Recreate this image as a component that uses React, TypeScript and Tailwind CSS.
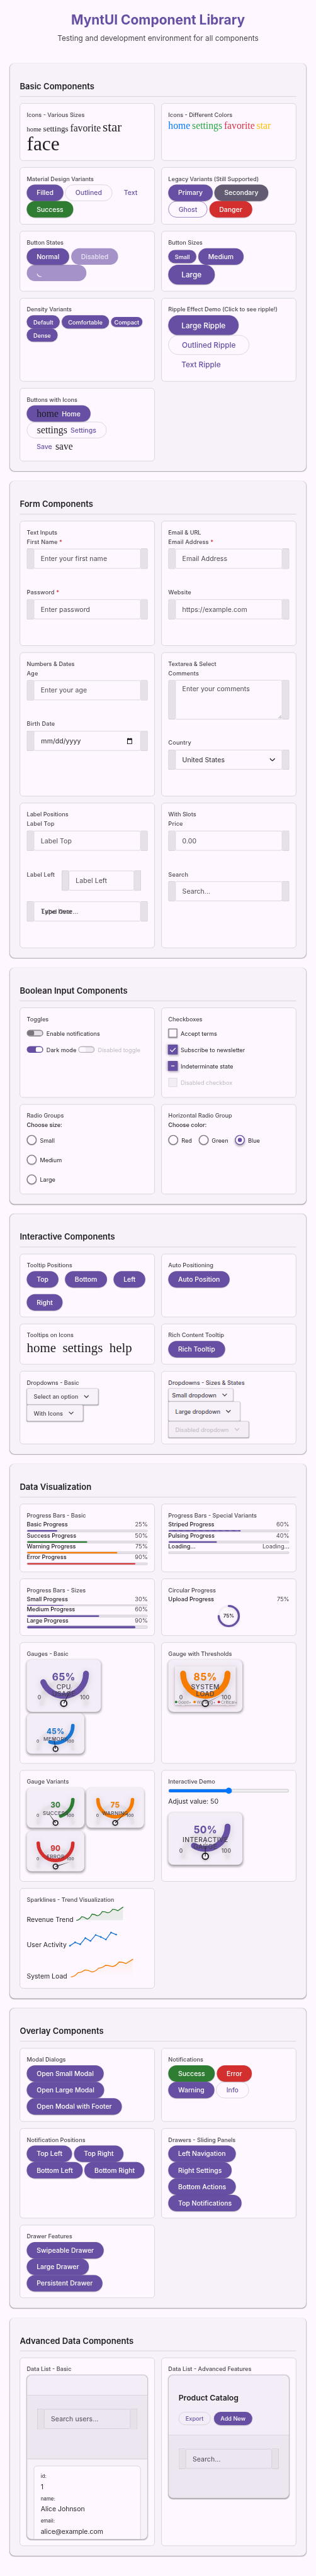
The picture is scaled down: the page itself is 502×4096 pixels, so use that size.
import React from 'react';

type Kids = { children?: React.ReactNode };

function Section({ title, children }: Kids & { title: string }) {
  return (
    <section className="mx-6 mb-6 rounded-xl bg-[#f7f2fa] px-6 pt-6 pb-6 shadow-[0_1px_3px_rgba(0,0,0,0.12),0_1px_2px_rgba(0,0,0,0.24)]">
      <h2 className="mt-5 mb-4 h-[37px] border-b border-[#cac4d0] text-[20px] leading-[25px] font-semibold text-[#1d1b20]">{title}</h2>
      <div className="grid grid-cols-2 gap-4">{children}</div>
    </section>
  );
}

function Card({ title, h, children }: Kids & { title: string; h: string }) {
  return (
    <div className={`min-w-0 rounded-lg border border-[#cac4d0] bg-[#fef7ff] px-4 pt-4 ${h}`}>
      <h3 className="mb-1 text-[14px] leading-[21px] font-medium text-[#49454f]">{title}</h3>
      {children}
    </div>
  );
}

const variants = {
  filled: 'bg-[#6750a4] text-white shadow-[0_1px_3px_rgba(0,0,0,0.12),0_1px_2px_rgba(0,0,0,0.24)]',
  secondary: 'bg-[#625b71] text-white shadow-[0_1px_3px_rgba(0,0,0,0.12),0_1px_2px_rgba(0,0,0,0.24)]',
  success: 'bg-[#2e7d32] text-white shadow-[0_1px_3px_rgba(0,0,0,0.12),0_1px_2px_rgba(0,0,0,0.24)]',
  danger: 'bg-[#d32f2f] text-white shadow-[0_1px_3px_rgba(0,0,0,0.12),0_1px_2px_rgba(0,0,0,0.24)]',
  outlined: 'border border-[#cac4d0] text-[#6750a4]',
  ghost: 'border border-[#6750a4] text-[#6750a4]',
  text: 'text-[#6750a4]',
  disabled: 'bg-[#a492c8] text-[#ebe6f5]',
};

const sizes = {
  md: 'h-10 px-6 text-[16px]',
  sm: 'h-8 px-4 text-[14px]',
  compact: 'h-6 px-2 text-[14px]',
  lg: 'h-12 px-8 text-[18px]',
};

function Btn({ v = 'filled', s = 'md', children }: Kids & { v?: keyof typeof variants; s?: keyof typeof sizes }) {
  return (
    <button className={`inline-flex shrink-0 items-center gap-2 rounded-full font-medium whitespace-nowrap ${variants[v]} ${sizes[s]}`}>
      {children}
    </button>
  );
}

function Row({ children }: Kids) {
  return <div className="flex items-center gap-x-[4.5px]">{children}</div>;
}

function Glyph({ c, children }: Kids & { c: string }) {
  return <span className={`font-['Liberation_Serif',serif] leading-none font-normal tracking-normal ${c}`}>{children}</span>;
}

function Shell({ h = 'h-[50px]', ih = 'h-12', inner = '', children }: Kids & { h?: string; ih?: string; inner?: string }) {
  return (
    <div className={`flex items-center ${h}`}>
      <div className="h-full w-[17px] shrink-0 rounded-l border border-r-0 border-[#cac4d0] bg-[#e6e0e9]" />
      <div className={`relative flex min-w-0 flex-1 rounded border border-[#cac4d0] px-4 text-[16px] tracking-[0.15px] text-[#49454f] ${ih} ${inner}`}>{children}</div>
      <div className="h-full w-[17px] shrink-0 rounded-r border border-l-0 border-[#cac4d0] bg-[#e6e0e9]" />
    </div>
  );
}

function Label({ children, required }: Kids & { required?: boolean }) {
  return (
    <div className="h-[25px] text-[14px] leading-[17px] font-medium tracking-[0.25px] text-[#49454f]">
      {children}
      {required && <span className="text-[#d32f2f]"> *</span>}
    </div>
  );
}

function Field({ label, required, children }: Kids & { label: string; required?: boolean }) {
  return (
    <div className="h-[123px]">
      <Label required={required}>{label}</Label>
      <Shell inner="items-center">{children}</Shell>
    </div>
  );
}

function Chevron() {
  return (
    <svg width="24" height="24" viewBox="0 0 24 24" fill="currentColor">
      <path d="M7.41 8.59 12 13.17l4.59-4.58L18 10l-6 6-6-6z" />
    </svg>
  );
}

function Dropdown({ h = 'h-10', pad = 'px-4', dim = false, children }: Kids & { h?: string; pad?: string; dim?: boolean }) {
  return (
    <div className={`flex w-fit items-center gap-2 rounded border border-[#cac4d0] text-[14px] font-medium shadow-[0_1px_3px_rgba(0,0,0,0.12),0_1px_2px_rgba(0,0,0,0.24)] ${dim ? 'bg-[#f4edf5] text-[#c6c0cb]' : 'bg-[#f7f2fa] text-[#49454f]'} ${h} ${pad}`}>
      <span>{children}</span>
      <Chevron />
    </div>
  );
}

function Progress({ label, value, w, color = 'bg-[#6750a4]', h = 'h-1.5' }: { label: string; value: string; w: string; color?: string; h?: string }) {
  return (
    <div>
      <div className="mb-1 flex h-[16.8px] justify-between text-[14px] leading-[15px]">
        <span className="font-medium text-[#1d1b20]">{label}</span>
        <span className="text-[#49454f]">{value}</span>
      </div>
      <div className={`overflow-hidden rounded-full border border-[#cac4d0] bg-[#e6e0e9] ${h}`}>
        <div className={`h-full rounded-full ${w} ${color}`} />
      </div>
    </div>
  );
}

function polar(cx: number, cy: number, r: number, deg: number) {
  const a = (deg * Math.PI) / 180;
  return [cx + r * Math.cos(a), cy + r * Math.sin(a)];
}

function Gauge({ value, text, lines, color, small = false, legend = false }: { value: number; text: string; lines: string[]; color: string; small?: boolean; legend?: boolean }) {
  const g = small
    ? { w: 140, h: 98, cx: 70, cy: 86.3, ay: 29.5, r: 42, sw: 8, aw: 8.6, hub: 5.8, hs: 2.6, nl: 37, vs: 18, vy: 49, ls: 12.4, ly: 67, lh: 14, ts: 10, ty: 71.7, tx: 27.3, tx2: 106.4 }
    : { w: 180, h: 127, cx: 90, cy: 106.5, ay: 34.2, r: 54, sw: 10.3, aw: 14.4, hub: 7.4, hs: 3, nl: 48.4, vs: 24, vy: 51, ls: 16, ly: 72.6, lh: 16.8, ts: 13, ty: 97.3, tx: 31, tx2: 141 };
  const sweep = Math.min(180, value * 2.42);
  const [ex, ey] = polar(g.cx, g.ay, g.r, sweep);
  const angle = value * 1.8 - 90;
  return (
    <div className={`relative rounded-xl bg-[#f3edf7] shadow-[0_3px_6px_rgba(0,0,0,0.16),0_3px_6px_rgba(0,0,0,0.23)] ${small ? 'h-[98px] w-[140px]' : 'h-[127px] w-[180px]'}`}>
      {legend && <div className="absolute top-4 left-4 h-[94px] w-[148px] bg-[#f1ebf5] shadow-[0_2px_5px_rgba(0,0,0,0.25),0_4px_14px_rgba(160,60,60,0.14)]" />}
      <svg className="relative block overflow-visible font-['Inter',sans-serif]" width={g.w} height={g.h} viewBox={`0 0 ${g.w} ${g.h}`}>
        <g fill="none" strokeLinecap="round">
          <path className="drop-shadow-[0_2px_6px_rgba(0,0,0,0.08)]" d={`M${g.cx - g.r} ${g.cy}A${g.r} ${g.r} 0 0 1 ${g.cx + g.r} ${g.cy}`} stroke="#e6e0e9" strokeWidth={g.sw} />
          <path className="drop-shadow-[0_2px_8px_rgba(0,0,0,0.14)]" d={`M${g.cx + g.r} ${g.ay}A${g.r} ${g.r} 0 0 1 ${ex} ${ey}`} stroke={color} strokeWidth={g.aw} />
        </g>
        <g textAnchor="middle" letterSpacing="0.5">
          <text className="drop-shadow-[0_1px_1px_rgba(0,0,0,0.15)]" x={g.cx} y={g.vy} fontSize={g.vs} fontWeight="700" fill={color}>{text}</text>
          {lines.map((l, i) => (
            <text key={l} x={g.cx} y={g.ly + i * g.lh} fontSize={g.ls} fontWeight="500" fill="#49454f">{l}</text>
          ))}
          <text x={g.tx} y={g.ty} fontSize={g.ts} fontWeight="500" fill="#49454f">0</text>
          <text x={g.tx2} y={g.ty} fontSize={g.ts} fontWeight="500" fill="#49454f">100</text>
        </g>
        <circle className="drop-shadow-[0_1px_3px_rgba(0,0,0,0.25)]" cx={g.cx} cy={g.cy} r={g.hub} fill="#f7f2fa" stroke="#1d1b20" strokeWidth={g.hs} />
        <path d={`M${g.cx - 1} ${g.cy}L${g.cx} ${g.cy - g.nl}L${g.cx + 1} ${g.cy}Z`} fill="#1d1b20" opacity={legend ? 0.6 : 1} transform={`rotate(${angle} ${g.cx} ${g.cy})`} />
      </svg>
      {legend && (
        <div className="absolute top-[96px] left-4 flex gap-[5px] text-[10px] leading-[14px] text-[#79747e]">
          {[['bg-[#2e7d32]', 'Good+'], ['bg-[#f57c00]', 'Warning+'], ['bg-[#d32f2f]', 'Critical+']].map(([c, t]) => (
            <span key={t} className="flex items-center gap-0.5">
              <i className={`size-1.5 rounded-full ${c}`} />
              {t}
            </span>
          ))}
        </div>
      )}
    </div>
  );
}

function smooth(ys: number[], step: number) {
  return ys
    .map((y, i) => {
      if (i === 0) return `M0 ${y}`;
      if (i === ys.length - 1) return `L${i * step} ${y}`;
      return `Q${(i - 0.5) * step} ${ys[i - 1]} ${i * step} ${y}`;
    })
    .join('');
}

const revenue = [32.1, 23.2, 29, 17, 21, 10.7, 13.8, 5.4, 8.9, 0];
const activity = [32.1, 23.7, 28.6, 13.4, 20.5, 5.8, 10.7, 17, 0, 4.9];
const load = [42.9, 32.6, 25.9, 30.8, 21.4, 14.7, 17.4, 6.7, 10.3, 0];

function Toggle({ label, state }: { label: string; state: 'off' | 'on' | 'disabled' }) {
  const box = { off: 'border-[#79747e] bg-[#e6e0e9]', on: 'justify-end border-[#6750a4] bg-[#6750a4]', disabled: 'border-[#bab5bd] bg-[#f0eaf4]' }[state];
  const knob = { off: 'rounded-r-[4px] bg-[#79747e]', on: 'rounded-l-[4px] bg-white', disabled: 'rounded-r-[4px] bg-[#fcf7fe]' }[state];
  return (
    <span className="flex h-10 items-center gap-2">
      <span className={`flex h-4 w-10 overflow-hidden rounded-full border-2 shadow-[inset_0_1px_2px_rgba(0,0,0,0.1)] ${box}`}>
        <span className={`h-3 w-4 ${knob}`} />
      </span>
      <span className={`text-[14px] ${state === 'disabled' ? 'text-[#c0bbc3]' : 'text-[#1d1b20]'}`}>{label}</span>
    </span>
  );
}

function Check({ label, state = 'off' }: { label: string; state?: 'off' | 'on' | 'mixed' | 'disabled' }) {
  const on = state === 'on' || state === 'mixed';
  return (
    <span className="flex h-10 items-center gap-2">
      {on ? (
        <span className="-mx-px flex size-6 items-center justify-center rounded-[1px] bg-[#6750a4] shadow-[-3px_0_5px_rgba(0,0,0,0.14),2px_3px_5px_rgba(0,0,0,0.22)]">
          <svg width="24" height="24" viewBox="0 0 24 24" fill="none" stroke="white" strokeWidth="2">
            {state === 'on' ? <path d="M5.5 12.5l4.500 4.500L18.500 8.500" /> : <path d="M8 12h8" />}
          </svg>
        </span>
      ) : (
        <span className={`size-[22px] border-2 ${state === 'disabled' ? 'border-[#e4dee7] bg-[#f3edf7]' : 'border-[#79747e] shadow-[0_1px_3px_rgba(0,0,0,0.12),0_1px_2px_rgba(0,0,0,0.24)]'}`} />
      )}
      <span className={`text-[14px] ${state === 'disabled' ? 'text-[#c0bbc3]' : 'text-[#1d1b20]'}`}>{label}</span>
    </span>
  );
}

function Radio({ label, on = false }: { label: string; on?: boolean }) {
  return (
    <span className="flex h-10 items-center gap-2">
      <span className={`flex size-6 items-center justify-center rounded-full border-2 bg-[#fef7ff] ${on ? 'border-[#6750a4] shadow-[0_3px_6px_rgba(0,0,0,0.16),0_3px_6px_rgba(0,0,0,0.23)]' : 'border-[#79747e] shadow-[0_1px_3px_rgba(0,0,0,0.12),0_1px_2px_rgba(0,0,0,0.24)]'}`}>
        {on && <span className="size-2.5 rounded-full bg-[#6750a4]" />}
      </span>
      <span className="text-[14px] text-[#1d1b20]">{label}</span>
    </span>
  );
}

export default function App() {
  return (
    <div className="h-[4096px] w-[502px] overflow-hidden bg-[#fef7ff]">
      <main className="h-[6266px] w-[768px] origin-top-left scale-[0.65367] font-['Inter',sans-serif] text-[#1d1b20]">
        <header className="h-[154px] pt-7 text-center">
          <h1 className="text-[32px] leading-10 font-bold text-[#6750a4]">MyntUI Component Library</h1>
          <p className="mt-[14px] text-[18px] leading-6 text-[#49454f]">Testing and development environment for all components</p>
        </header>

        <Section title="Basic Components">
          <Card title="Icons - Various Sizes" h="h-[140px]">
            <div className="flex h-[33px] items-baseline gap-[4.4px]">
              <Glyph c="text-[16px]">home</Glyph>
              <Glyph c="text-[20px]">settings</Glyph>
              <Glyph c="text-[24px]">favorite</Glyph>
              <Glyph c="text-[32px]">star</Glyph>
            </div>
            <div className="flex"><Glyph c="text-[48px]">face</Glyph></div>
          </Card>
          <Card title="Icons - Different Colors" h="h-[140px]">
            <div className="flex gap-[4.4px]">
              <Glyph c="text-[24px] text-[#007bff]">home</Glyph>
              <Glyph c="text-[24px] text-[#28a745]">settings</Glyph>
              <Glyph c="text-[24px] text-[#dc3545]">favorite</Glyph>
              <Glyph c="text-[24px] text-[#ffc107]">star</Glyph>
            </div>
          </Card>
          <Card title="Material Design Variants" h="h-[139px]">
            <Row>
              <Btn>Filled</Btn>
              <Btn v="outlined">Outlined</Btn>
              <Btn v="text">Text</Btn>
            </Row>
            <Row>
              <Btn v="success">Success</Btn>
            </Row>
          </Card>
          <Card title="Legacy Variants (Still Supported)" h="h-[139px]">
            <Row>
              <Btn>Primary</Btn>
              <Btn v="secondary">Secondary</Btn>
            </Row>
            <Row>
              <Btn v="ghost">Ghost</Btn>
              <Btn v="danger">Danger</Btn>
            </Row>
          </Card>
          <Card title="Button States" h="h-[147px]">
            <Row>
              <Btn>Normal</Btn>
              <Btn v="disabled">Disabled</Btn>
            </Row>
            <div className="flex h-10 w-[145px] items-center rounded-full bg-[#a492c8] px-6">
              <svg width="20" height="20" viewBox="0 0 20 20" fill="none" stroke="#f3effa" strokeWidth="2">
                <path d="M1.2 11.5A9 9 0 0 0 12 18.8" />
              </svg>
            </div>
          </Card>
          <Card title="Button Sizes" h="h-[147px]">
            <Row>
              <Btn s="sm">Small</Btn>
              <Btn>Medium</Btn>
            </Row>
            <Btn s="lg">Large</Btn>
          </Card>
          <Card title="Density Variants" h="h-[203px]">
            <Row>
              <Btn s="sm">Default</Btn>
              <Btn s="sm">Comfortable</Btn>
              <Btn s="compact">Compact</Btn>
            </Row>
            <Row>
              <Btn s="sm">Dense</Btn>
            </Row>
          </Card>
          <Card title="Ripple Effect Demo (Click to see ripple!)" h="h-[203px]">
            <div className="flex flex-col items-start">
              <Btn s="lg">Large Ripple</Btn>
              <Btn s="lg" v="outlined">Outlined Ripple</Btn>
              <Btn s="lg" v="text">Text Ripple</Btn>
            </div>
          </Card>
          <Card title="Buttons with Icons" h="h-[178px]">
            <div className="flex flex-col items-start">
              <Btn><Glyph c="text-[24px] text-[#1d1b20]">home</Glyph>Home</Btn>
              <Btn v="outlined"><Glyph c="text-[24px] text-[#1d1b20]">settings</Glyph>Settings</Btn>
              <Btn v="text">Save<Glyph c="text-[24px] text-[#1d1b20]">save</Glyph></Btn>
            </div>
          </Card>
        </Section>

        <Section title="Form Components">
          <Card title="Text Inputs" h="h-[304px]">
            <Field label="First Name" required>Enter your first name</Field>
            <Field label="Password" required>Enter password</Field>
          </Card>
          <Card title="Email & URL" h="h-[304px]">
            <Field label="Email Address" required>Email Address</Field>
            <Field label="Website">https://example.com</Field>
          </Card>
          <Card title="Numbers & Dates" h="h-[350px]">
            <Field label="Age">Enter your age</Field>
            <Field label="Birth Date">
              <span className="ml-px flex-1 text-[#1d1b20]">mm/dd/yyyy</span>
              <svg className="mr-[3px]" width="14" height="15" viewBox="0 0 14 15" fill="#000">
                <path d="M3 0h1.6v1.4h4.8V0H11v1.4h2V15H1V1.4h2zM2.4 5v8.6h9.2V5z" fillRule="evenodd" />
              </svg>
            </Field>
          </Card>
          <Card title="Textarea & Select" h="h-[350px]">
            <div className="h-[169px]">
              <Label>Comments</Label>
              <Shell h="h-24" ih="h-24" inner="pt-[11px]">
                <span className="leading-5">Enter your comments</span>
                <svg className="absolute right-px bottom-px" width="8" height="8" viewBox="0 0 8 8" stroke="#49454f" strokeWidth="0.8">
                  <path d="M0 8L8 0M4 8L8 4" />
                </svg>
              </Shell>
            </div>
            <Field label="Country">
              <span className="flex-1 text-[#1d1b20]">United States</span>
              <svg width="14" height="8" viewBox="0 0 14 8" fill="none" stroke="#1d1b20" strokeWidth="2">
                <path d="M1 1l6 6 6-6" />
              </svg>
            </Field>
          </Card>
          <Card title="Label Positions" h="h-[353px]">
            <Field label="Label Top">Label Top</Field>
            <div className="flex h-[74px] gap-4">
              <div className="w-[69px] shrink-0 text-[14px] leading-[17px] font-medium tracking-[0.25px] whitespace-nowrap text-[#49454f]">Label Left</div>
              <div className="-mt-px w-[193px]"><Shell inner="items-center">Label Left</Shell></div>
            </div>
            <Shell inner="items-center">
              <span>Type here...</span>
              <span className="absolute top-[15px] left-[18px] text-[14px] leading-[17px] font-medium tracking-[0.25px]">Label Over</span>
            </Shell>
          </Card>
          <Card title="With Slots" h="h-[353px]">
            <Field label="Price">0.00</Field>
            <Field label="Search">Search...</Field>
          </Card>
        </Section>

        <Section title="Boolean Input Components">
          <Card title="Toggles" h="h-[219px]">
            <Toggle label="Enable notifications" state="off" />
            <div className="flex gap-[4.5px]">
              <Toggle label="Dark mode" state="on" />
              <Toggle label="Disabled toggle" state="disabled" />
            </div>
          </Card>
          <Card title="Checkboxes" h="h-[219px]">
            <Check label="Accept terms" />
            <Check label="Subscribe to newsletter" state="on" />
            <Check label="Indeterminate state" state="mixed" />
            <Check label="Disabled checkbox" state="disabled" />
          </Card>
          <Card title="Radio Groups" h="h-[219px]">
            <div className="mb-2 text-[14px] leading-[17px] font-medium">Choose size:</div>
            <div className="flex flex-col gap-2">
              <Radio label="Small" />
              <Radio label="Medium" />
              <Radio label="Large" />
            </div>
          </Card>
          <Card title="Horizontal Radio Group" h="h-[219px]">
            <div className="mb-2 text-[14px] leading-[17px] font-medium">Choose color:</div>
            <div className="flex gap-4">
              <Radio label="Red" />
              <Radio label="Green" />
              <Radio label="Blue" on />
            </div>
          </Card>
        </Section>

        <Section title="Interactive Components">
          <Card title="Tooltip Positions" h="h-[154px]">
            <div className="flex flex-wrap gap-4">
              <Btn>Top</Btn>
              <Btn>Bottom</Btn>
              <Btn>Left</Btn>
              <Btn>Right</Btn>
            </div>
          </Card>
          <Card title="Auto Positioning" h="h-[154px]">
            <Btn>Auto Position</Btn>
          </Card>
          <Card title="Tooltips on Icons" h="h-[99px]">
            <div className="flex gap-4">
              <Glyph c="text-[32px]">home</Glyph>
              <Glyph c="text-[32px]">settings</Glyph>
              <Glyph c="text-[32px]">help</Glyph>
            </div>
          </Card>
          <Card title="Rich Content Tooltip" h="h-[99px]">
            <Btn>Rich Tooltip</Btn>
          </Card>
          <Card title="Dropdowns - Basic" h="h-[178px]">
            <Dropdown>Select an option</Dropdown>
            <Dropdown>With Icons</Dropdown>
          </Card>
          <Card title="Dropdowns - Sizes & States" h="h-[178px]">
            <Dropdown h="h-8" pad="px-2">Small dropdown</Dropdown>
            <Dropdown h="h-12">Large dropdown</Dropdown>
            <Dropdown dim>Disabled dropdown</Dropdown>
          </Card>
        </Section>

        <Section title="Data Visualization">
          <Card title="Progress Bars - Basic" h="h-[166px]">
            <Progress label="Basic Progress" value="25%" w="w-[25%]" />
            <Progress label="Success Progress" value="50%" w="w-[50%]" color="bg-[#2e7d32]" />
            <Progress label="Warning Progress" value="75%" w="w-[75%]" color="bg-[#f57c00]" />
            <Progress label="Error Progress" value="90%" w="w-[90%]" color="bg-[#d32f2f]" />
          </Card>
          <Card title="Progress Bars - Special Variants" h="h-[166px]">
            <Progress label="Striped Progress" value="60%" w="w-[60%]" color="bg-[#6750a4] bg-[linear-gradient(45deg,rgba(255,255,255,0.15)_25%,transparent_25%,transparent_50%,rgba(255,255,255,0.15)_50%,rgba(255,255,255,0.15)_75%,transparent_75%)] bg-[length:16px_16px]" />
            <Progress label="Pulsing Progress" value="40%" w="w-[40%]" />
            <Progress label="Loading..." value="Loading..." w="w-0" />
          </Card>
          <Card title="Progress Bars - Sizes" h="h-[139px]">
            <Progress label="Small Progress" value="30%" w="w-[30%]" h="h-1" />
            <Progress label="Medium Progress" value="60%" w="w-[60%]" />
            <Progress label="Large Progress" value="90%" w="w-[90%]" h="h-2" />
          </Card>
          <Card title="Circular Progress" h="h-[139px]">
            <div className="flex h-[21px] justify-between text-[14px] leading-[15px]">
              <span className="font-medium">Upload Progress</span>
              <span className="text-[#49454f]">75%</span>
            </div>
            <svg className="mx-auto block" width="56" height="56" viewBox="0 0 56 56">
              <circle cx="28" cy="28" r="24.5" fill="none" stroke="#f3eef6" strokeWidth="5" />
              <path className="drop-shadow-[0_1px_3px_rgba(0,0,0,0.15)]" d="M28 3.5A24.5 24.5 0 1 1 3.5 28" fill="none" stroke="#6750a4" strokeWidth="5" strokeLinecap="round" />
              <text x="28" y="32.2" textAnchor="middle" fontSize="12" fontWeight="600" fill="#1d1b20">75%</text>
            </svg>
          </Card>
          <Card title="Gauges - Basic" h="h-[295px]">
            <div className="flex flex-col gap-[3.5px]">
              <Gauge value={65} text="65%" lines={['CPU', 'USAGE']} color="#6750a4" />
              <Gauge value={45} text="45%" lines={['MEMORY']} color="#1976d2" small />
            </div>
          </Card>
          <Card title="Gauge with Thresholds" h="h-[295px]">
            <Gauge value={85} text="85%" lines={['SYSTEM', 'LOAD']} color="#f57c00" legend />
          </Card>
          <Card title="Gauge Variants" h="h-[271px]">
            <div className="flex flex-wrap gap-x-[4.5px] gap-y-2">
              <Gauge value={30} text="30" lines={['SUCCESS']} color="#2e7d32" small />
              <Gauge value={75} text="75" lines={['WARNING']} color="#f57c00" small />
              <Gauge value={90} text="90" lines={['ERROR']} color="#d32f2f" small />
            </div>
          </Card>
          <Card title="Interactive Demo" h="h-[271px]">
            <input type="range" defaultValue={50} className="mt-[2px] block h-4 w-[294px]" />
            <p className="mt-[8px] mb-[16px] text-[16px] leading-[21px]">Adjust value: 50</p>
            <Gauge value={50} text="50%" lines={['INTERACTIVE', 'GAUGE']} color="#6750a4" />
          </Card>
          <Card title="Sparklines - Trend Visualization" h="h-[244px]">
            <div className="flex h-10 items-end">
              <span className="-mb-[2px] w-[121px] text-[16px] leading-none">Revenue Trend</span>
              <svg className="mb-1 overflow-visible" width="114" height="32" viewBox="0 0 114 32" fill="none">
                <path d={`${smooth(revenue, 12.55)}V32.1H0Z`} fill="#2e7d32" opacity="0.1" />
                <path d={smooth(revenue, 12.55)} stroke="#2e7d32" strokeWidth="2" strokeLinecap="round" />
              </svg>
            </div>
            <div className="mt-[22px] flex h-10 items-end">
              <span className="-mb-[2px] w-[105px] text-[16px] leading-none">User Activity</span>
              <svg className="mb-1 overflow-visible" width="113" height="32" viewBox="0 0 113 32" fill="none">
                <polyline points={activity.map((y, i) => `${i * 12.48},${y}`).join(' ')} stroke="#1976d2" strokeWidth="2" />
                {activity.map((y, i) => <circle key={i} cx={i * 12.48} cy={y} r="2" fill="#1976d2" />)}
              </svg>
            </div>
            <div className="mt-[26px] flex h-[50px] items-end">
              <span className="-mb-[2px] w-[108px] text-[16px] leading-none">System Load</span>
              <svg className="mb-1 overflow-visible" width="150" height="43" viewBox="0 0 150 43" fill="none">
                <linearGradient id="loadFill" x1="0" y1="0" x2="0" y2="1">
                  <stop offset="0" stopColor="#f57c00" stopOpacity="0.08" />
                  <stop offset="1" stopColor="#f57c00" stopOpacity="0" />
                </linearGradient>
                <path d={`${smooth(load, 16.65)}V42.9H0Z`} fill="url(#loadFill)" />
                <path d={smooth(load, 16.65)} stroke="#f57c00" strokeWidth="2" strokeLinecap="round" />
              </svg>
            </div>
          </Card>
        </Section>

        <Section title="Overlay Components">
          <Card title="Modal Dialogs" h="h-[179px]">
            <div className="flex flex-col items-start">
              <Btn>Open Small Modal</Btn>
              <Btn>Open Large Modal</Btn>
              <Btn>Open Modal with Footer</Btn>
            </div>
          </Card>
          <Card title="Notifications" h="h-[179px]">
            <Row>
              <Btn v="success">Success</Btn>
              <Btn v="danger">Error</Btn>
            </Row>
            <Row>
              <Btn>Warning</Btn>
              <Btn v="outlined">Info</Btn>
            </Row>
          </Card>
          <Card title="Notification Positions" h="h-[219px]">
            <Row>
              <Btn>Top Left</Btn>
              <Btn>Top Right</Btn>
            </Row>
            <Row>
              <Btn>Bottom Left</Btn>
              <Btn>Bottom Right</Btn>
            </Row>
          </Card>
          <Card title="Drawers - Sliding Panels" h="h-[219px]">
            <div className="flex flex-col items-start">
              <Btn>Left Navigation</Btn>
              <Btn>Right Settings</Btn>
              <Btn>Bottom Actions</Btn>
              <Btn>Top Notifications</Btn>
            </div>
          </Card>
          <Card title="Drawer Features" h="h-[178px]">
            <div className="flex flex-col items-start">
              <Btn>Swipeable Drawer</Btn>
              <Btn>Large Drawer</Btn>
              <Btn>Persistent Drawer</Btn>
            </div>
          </Card>
        </Section>

        <Section title="Advanced Data Components">
          <Card title="Data List - Basic" h="h-[458px]">
            <div className="h-[400px] overflow-hidden rounded-xl border border-[#cac4d0] bg-[#f7f2fa] shadow-[0_1px_3px_rgba(0,0,0,0.12),0_1px_2px_rgba(0,0,0,0.24)]">
              <div className="h-[49px] border-b border-[#cac4d0] bg-[#f3edf7]" />
              <div className="h-[155px] border-b border-[#cac4d0] bg-[#ece6f0] px-6 pt-8">
                <Shell inner="items-center">Search users...</Shell>
              </div>
              <div className="mx-4 mt-4 h-[220px] rounded-lg border border-[#cac4d0] bg-[#fef7ff] px-4 pt-4">
                {[['id:', '1'], ['name:', 'Alice Johnson'], ['email:', 'alice@example.com']].map(([k, v]) => (
                  <div key={k} className="h-[54px]">
                    <div className="text-[12px] leading-[18px] font-medium text-[#49454f]">{k}</div>
                    <div className="mt-1 text-[16px] leading-6">{v}</div>
                  </div>
                ))}
              </div>
            </div>
          </Card>
          <Card title="Data List - Advanced Features" h="h-[458px]">
            <div className="h-[300px] overflow-hidden rounded-xl border border-[#cac4d0] bg-[#ece6f0] shadow-[0_1px_3px_rgba(0,0,0,0.12),0_1px_2px_rgba(0,0,0,0.24)]">
              <div className="h-[146px] border-b border-[#cac4d0] bg-[#f3edf7] px-6 pt-[43px]">
                <h4 className="text-[18.72px] leading-[26px] font-semibold">Product Catalog</h4>
                <div className="mt-5 flex gap-2">
                  <Btn s="sm" v="outlined">Export</Btn>
                  <Btn s="sm">Add New</Btn>
                </div>
              </div>
              <div className="px-6 pt-8">
                <Shell inner="items-center">Search...</Shell>
              </div>
            </div>
          </Card>
        </Section>
      </main>
    </div>
  );
}
